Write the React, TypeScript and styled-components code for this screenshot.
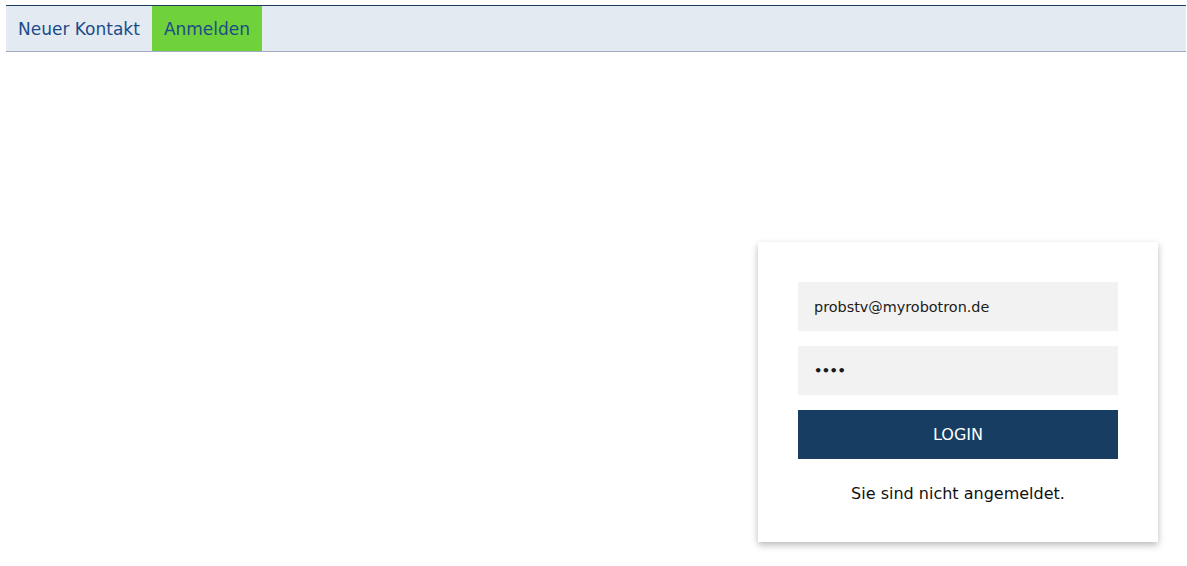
import React, { useState } from 'react';
import styled, { createGlobalStyle } from 'styled-components';

const GlobalStyle = createGlobalStyle`
  html, body {
    margin: 0;
    padding: 0;
    background: #ffffff;
    font-family: "DejaVu Sans", Verdana, sans-serif;
  }
`;

const Page = styled.div`
  padding: 5px 1px 0 6px;
`;

const NavBar = styled.nav`
  display: flex;
  height: 45px;
  background: #e3eaf2;
  border-top: 1px solid #1b3c5e;
  border-bottom: 1px solid #a7a9c6;
`;

const NavItem = styled.a<{ $active?: boolean }>`
  display: flex;
  align-items: center;
  padding: 0 12px;
  font-size: 17px;
  color: #1c4b8a;
  text-decoration: none;
  cursor: pointer;
  background: ${props => (props.$active ? '#70d23a' : 'transparent')};
`;

const Content = styled.main`
  display: flex;
  justify-content: flex-end;
  padding: 190px 28px 16px 0;
`;

const Card = styled.form`
  width: 400px;
  box-sizing: border-box;
  padding: 40px 40px 39px;
  background: #ffffff;
  box-shadow: 0 3px 7px rgba(0, 0, 0, 0.28);
  display: flex;
  flex-direction: column;
  gap: 15px;
`;

const Input = styled.input<{ $secret?: boolean }>`
  height: 49px;
  box-sizing: border-box;
  border: none;
  outline: none;
  padding: 0 16px;
  background: #f2f2f2;
  font-family: "DejaVu Sans", Verdana, sans-serif;
  font-size: ${props => (props.$secret ? '13px' : '14.4px')};
  font-weight: ${props => (props.$secret ? 'bold' : 'normal')};
  letter-spacing: ${props => (props.$secret ? '-0.5px' : 'normal')};
  color: #1a1a1a;
`;

const LoginButton = styled.button`
  height: 49px;
  border: none;
  background: #173d63;
  color: #ffffff;
  font-family: "DejaVu Sans", Verdana, sans-serif;
  font-size: 16px;
  cursor: pointer;
`;

const Status = styled.p`
  margin: 10px 0 0;
  text-align: center;
  font-size: 16px;
  line-height: 19px;
  color: #111111;
`;

const App: React.FC = () => {
  const [email, setEmail] = useState<string>('probstv@myrobotron.de');
  const [password, setPassword] = useState<string>('1234');

  return (
    <>
      <GlobalStyle />
      <Page>
        <NavBar>
          <NavItem>Neuer Kontakt</NavItem>
          <NavItem $active>Anmelden</NavItem>
        </NavBar>
        <Content>
          <Card onSubmit={e => e.preventDefault()}>
            <Input type="text" value={email} onChange={e => setEmail(e.target.value)} />
            <Input $secret type="password" value={password} onChange={e => setPassword(e.target.value)} />
            <LoginButton type="submit">LOGIN</LoginButton>
            <Status>Sie sind nicht angemeldet.</Status>
          </Card>
        </Content>
      </Page>
    </>
  );
};

export default App;
